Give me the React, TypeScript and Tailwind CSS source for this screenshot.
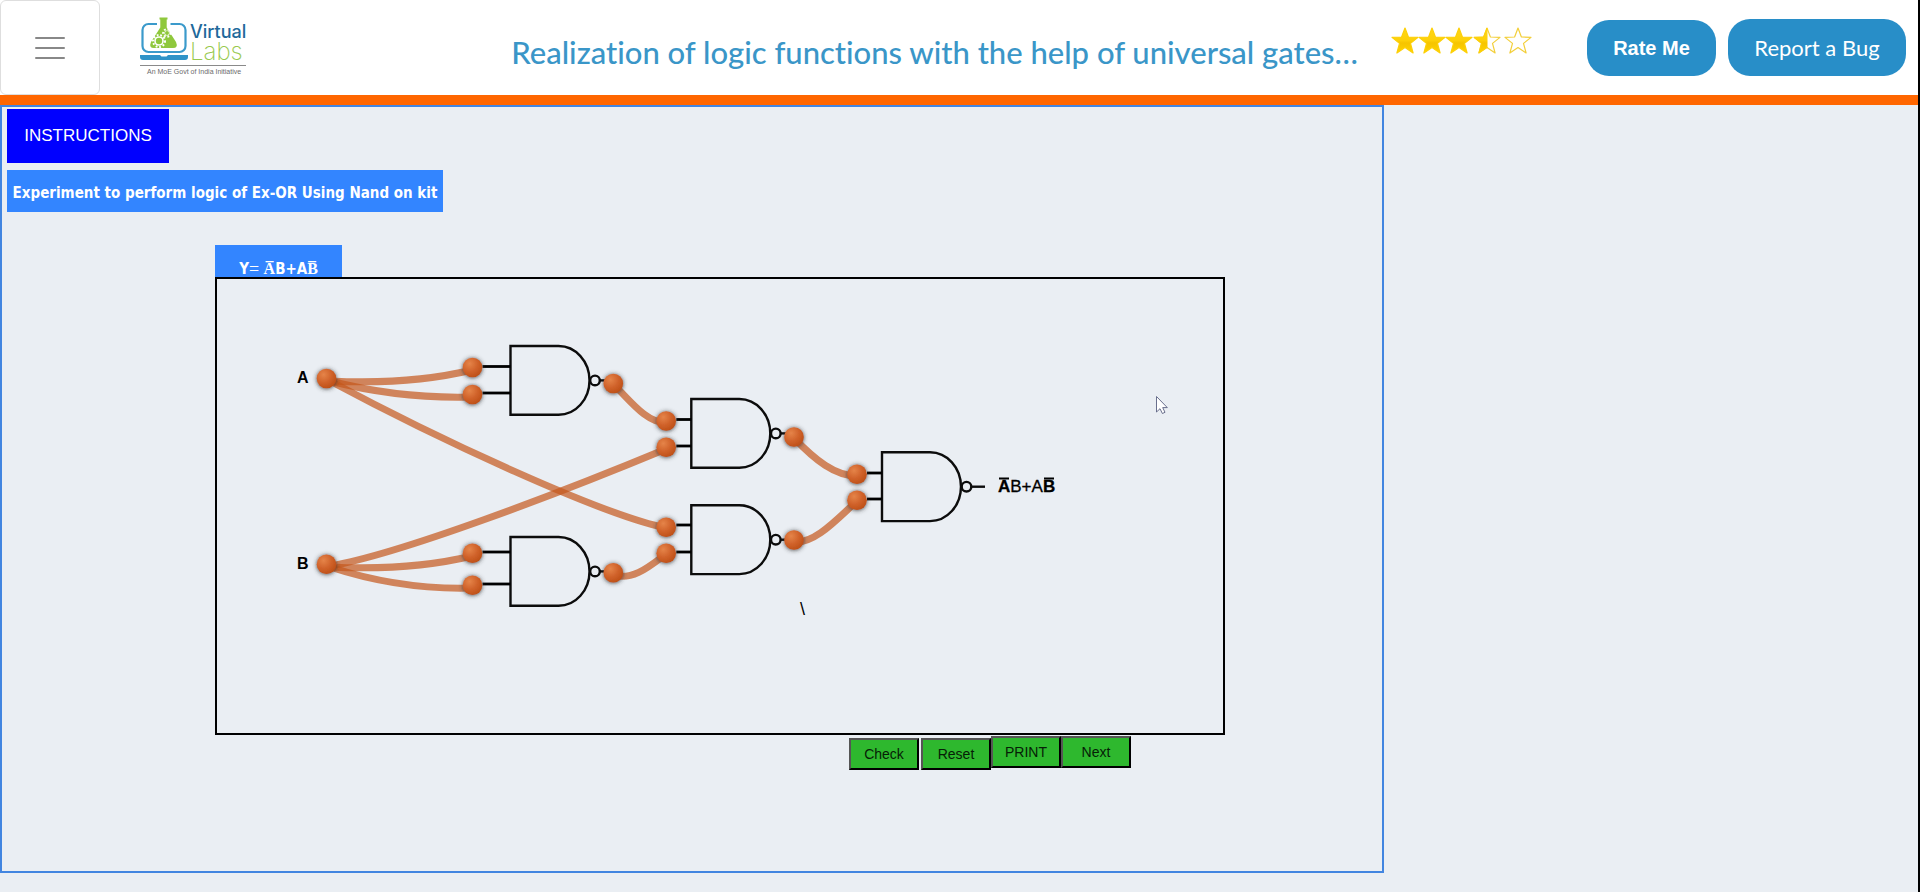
import React from "react";

type Point = { x: number; y: number };

const wires: string[] = [
  "M330 381 Q410 385 472 370",
  "M330 381 Q400 399 472 397",
  "M330 381 C440 440 600 514 666 528",
  "M330 566 C400 554 560 493 666 449",
  "M330 567 Q410 571 472 556",
  "M330 567 Q400 590 472 588",
  "M613 384 C630 400 645 422 666 423",
  "M613 575 C633 581 650 566 666 554",
  "M794 438 C815 460 835 476 857 476",
  "M794 542 C815 544 838 518 857 501",
];

const nodes: Point[] = [
  { x: 326.5, y: 378.5 },
  { x: 326.5, y: 564.3 },
  { x: 472.5, y: 367.5 },
  { x: 472.5, y: 394.5 },
  { x: 472.5, y: 553.3 },
  { x: 472.5, y: 585.3 },
  { x: 613.3, y: 383.5 },
  { x: 613.3, y: 572.7 },
  { x: 666.2, y: 421 },
  { x: 666.2, y: 447.3 },
  { x: 666.2, y: 527.3 },
  { x: 666.2, y: 553.3 },
  { x: 794, y: 437 },
  { x: 794, y: 540 },
  { x: 857, y: 474.3 },
  { x: 857, y: 500.3 },
];

const gates = [
  { x: 510.5, y: 346, lead: 28, inputs: [366.5, 393], out: 10 },
  { x: 510.5, y: 537, lead: 28, inputs: [552, 584], out: 10 },
  { x: 691.3, y: 399, lead: 15, inputs: [419.5, 446], out: 10 },
  { x: 691.3, y: 505.3, lead: 15, inputs: [525, 552], out: 10 },
  { x: 882, y: 452.3, lead: 15, inputs: [473, 499], out: 14 },
];

const STAR = "M13 0 L16.4 9 L26 9.4 L18.5 15.4 L21.1 25 L13 19.5 L4.9 25 L7.5 15.4 L0 9.4 L9.6 9 Z";

function Stars() {
  const offsets = [0, 27, 54, 82, 113];
  return (
    <svg role="img" aria-label="Rated 3.5 out of 5" width="142" height="28" viewBox="-1 -1 142 28">
      <defs>
        <linearGradient id="gold" x1="0" y1="0" x2="0" y2="1">
          <stop offset="0" stopColor="#ffd71a" />
          <stop offset="0.5" stopColor="#fdd008" />
          <stop offset="0.6" stopColor="#f6c400" />
          <stop offset="1" stopColor="#ffd400" />
        </linearGradient>
        <clipPath id="half">
          <rect x="-1" y="-1" width="14.5" height="28" />
        </clipPath>
      </defs>
      {offsets.map((dx, i) => (
        <g key={dx} transform={`translate(${dx} 0)`}>
          <path
            d={STAR}
            fill={i < 3 ? "url(#gold)" : "#fff"}
            stroke={i < 3 ? "#fdd008" : "#f3cf3a"}
            strokeWidth="1.2"
            strokeLinejoin="round"
          />
          {i === 3 && <path d={STAR} fill="url(#gold)" stroke="#fdd008" clipPath="url(#half)" />}
        </g>
      ))}
    </svg>
  );
}

function Gear({ x, y, r, hole }: { x: number; y: number; r: number; hole: number }) {
  return (
    <g>
      <circle cx={x} cy={y} r={r} fill="none" stroke="#fff" strokeWidth="2" strokeDasharray="1.8 1.8" />
      <circle cx={x} cy={y} r={r - 1.2} fill="#fff" />
      <circle cx={x} cy={y} r={hole} fill="#8fc83c" />
    </g>
  );
}

function Logo() {
  return (
    <svg role="img" aria-label="Virtual Labs" width="108" height="60" viewBox="140 16 108 60">
      <rect x="142.5" y="24" width="43" height="28" rx="6" fill="none" stroke="#3b9acb" strokeWidth="2.2" />
      <rect x="157" y="21" width="13.5" height="5" fill="#fff" />
      <path
        d="M159.5 17.5 h8 v2 h-0.8 v8 L176 42 q2.5 6 -3 6 h-19 q-5.5 0 -3 -6 L160.3 27.5 v-8 h-0.8 Z"
        fill="#8fc83c"
      />
      <Gear x={159} y={41} r={6} hole={3.2} />
      <Gear x={167} y={33} r={3.8} hole={2} />
      <path d="M140 55 h20 l1.5 1.5 h5 l1.5 -1.5 h20 v2 q0 3 -3 3 h-42 q-3 0 -3 -3 Z" fill="#2f93c8" />
      <text x="190" y="38" fill="#20689a" className="font-[Inter] text-[18px] font-medium">
        Virtual
      </text>
      <text x="190" y="60" fill="#98c94e" className="font-[Inter] text-[24px] font-extralight">
        Labs
      </text>
      <path d="M140 65.5 h106" stroke="#8a8a8a" strokeWidth="1" />
      <text x="147" y="74" fill="#6b6b6b" className="font-['Liberation_Sans'] text-[7px]">
        An MoE Govt of India Initiative
      </text>
    </svg>
  );
}

function Circuit() {
  return (
    <svg role="img" aria-label="Ex-OR built from NAND gates" className="block w-full" viewBox="217 279 1006 454">
      <defs>
        <radialGradient id="ball" cx="0.35" cy="0.3" r="0.75">
          <stop offset="0" stopColor="#e58449" />
          <stop offset="0.55" stopColor="#d0622a" />
          <stop offset="1" stopColor="#bd4f16" />
        </radialGradient>
        <filter id="shade" x="-40%" y="-40%" width="180%" height="180%">
          <feDropShadow dx="0" dy="0.5" stdDeviation="2" floodColor="#333" floodOpacity="0.9" />
        </filter>
      </defs>

      {gates.map((g) => (
        <g key={`${g.x}-${g.y}`} fill="none" stroke="#0c0c0c" strokeWidth="2.4">
          <path d={`M${g.x} ${g.y} h48 a31 34.4 0 0 1 0 68.8 h-48 Z`} />
          <circle cx={g.x + 84.5} cy={g.y + 34.4} r="4.8" />
          <path d={`M${g.x + 89} ${g.y + 34.4} h${g.out}`} />
          {g.inputs.map((y) => (
            <path key={y} d={`M${g.x - g.lead} ${y} h${g.lead}`} stroke="#000" strokeWidth="2.8" />
          ))}
        </g>
      ))}

      <g fill="none" stroke="#c4571b" strokeOpacity="0.7" strokeWidth="7">
        {wires.map((d) => (
          <path key={d} d={d} />
        ))}
      </g>

      {nodes.map((n) => (
        <circle key={`${n.x}-${n.y}`} cx={n.x} cy={n.y} r="9.8" fill="url(#ball)" filter="url(#shade)" />
      ))}

      <g fill="#000" className="font-['Liberation_Sans'] text-[16px]">
        <text x="297" y="383" className="font-bold">A</text>
        <text x="297" y="569" className="font-bold">B</text>
        <text x="998" y="492" stroke="#000" strokeWidth="0.3" className="text-[17px]">
          <tspan className="font-bold">A</tspan>B+A<tspan className="font-bold">B</tspan>
        </text>
        <path d="M999 478.5 h10 M1044 478.5 h10" stroke="#000" strokeWidth="2" />
        <text x="800" y="615" className="text-[18px]">\</text>
      </g>

      <path
        d="M1156.5 396.5 v15.5 l3.5 -3.3 l2.4 4.8 l2.6 -1.2 l-2.3 -4.7 h4.6 Z"
        fill="#fff"
        stroke="#5a6080"
        strokeWidth="0.9"
      />
    </svg>
  );
}

function KitButton({ label, lowered }: { label: string; lowered?: boolean }) {
  return (
    <button
      type="button"
      className={`h-8 w-[70px] border-2 border-t-[#555] border-l-[#555] border-r-black border-b-black bg-[#2eb82e] text-sm text-[#062006] ${
        lowered ? "mt-0.5" : ""
      }`}
    >
      {label}
    </button>
  );
}

export default function App() {
  return (
    <div className="min-h-screen border-r-2 border-black bg-[#eaeef3] font-['Liberation_Sans',sans-serif]">
      <header className="flex h-[105px] border-b-10 border-[#ff6600] bg-white">
        <button
          type="button"
          aria-label="Menu"
          className="flex w-[100px] flex-none flex-col items-center justify-center gap-2 rounded-md border border-[#dedede]"
        >
          <span className="h-0.5 w-[30px] rounded bg-[#888]" />
          <span className="h-0.5 w-[30px] rounded bg-[#888]" />
          <span className="h-0.5 w-[30px] rounded bg-[#888]" />
        </button>
        <a href="#home" className="ml-10 flex-none pt-4">
          <Logo />
        </a>
        <h1 className="flex flex-1 items-center justify-end pt-2.5 pr-[33px] font-[Lato,sans-serif] text-[31px] font-medium whitespace-nowrap text-[#3a96c8] [font-variant-ligatures:none]">
          Realization of logic functions with the help of universal gates…
        </h1>
        <div className="pt-[27px]">
          <Stars />
        </div>
        <div className="flex flex-none items-end gap-3 pr-3 pb-[19px] pl-[54px] text-white">
          <button type="button" className="h-14 w-[129px] rounded-[22px] bg-[#288ec8] font-['Liberation_Sans'] text-xl font-bold">
            Rate Me
          </button>
          <button type="button" className="h-[57px] w-[178px] rounded-[22px] bg-[#288ec8] font-[Lato,sans-serif] text-[22px]">
            Report a Bug
          </button>
        </div>
      </header>

      <main className="h-[768px] w-[1384px] max-w-full border-2 border-[#4285e0] pt-0.5 pl-[5px]">
        <button type="button" className="block h-[54px] w-[162px] bg-[#0000ff] text-[17px] text-white">
          INSTRUCTIONS
        </button>
        <h2 className="mt-[7px] flex h-[42px] w-[436px] items-center justify-center bg-[#3385ff] pt-1 font-['DejaVu_Sans_Condensed','DejaVu_Sans',sans-serif] text-[15px] font-bold whitespace-nowrap text-white">
          Experiment to perform logic of Ex-OR Using Nand on kit
        </h2>
        <section className="mt-[33px] ml-52 w-[1010px]">
          <h3 className="flex h-8 w-[127px] items-end justify-center bg-[#3385ff] font-['DejaVu_Sans_Condensed','DejaVu_Sans',sans-serif] text-[15px] leading-4 font-bold whitespace-pre text-white">
            <span>Y</span>
            <span className="font-['Liberation_Serif'] text-lg leading-4 font-normal">= </span>
            <span className="font-['Liberation_Serif'] text-base leading-4">A&#x0305;</span>
            <span>B+A</span>
            <span className="font-['Liberation_Serif'] text-base leading-4">B&#x0305;</span>
          </h3>
          <div className="border-2 border-black">
            <Circuit />
          </div>
          <div className="mt-px flex items-start justify-end pr-[94px]">
            <div className="mr-0.5 flex">
              <KitButton label="Check" lowered />
            </div>
            <KitButton label="Reset" lowered />
            <KitButton label="PRINT" />
            <KitButton label="Next" />
          </div>
        </section>
      </main>
    </div>
  );
}
